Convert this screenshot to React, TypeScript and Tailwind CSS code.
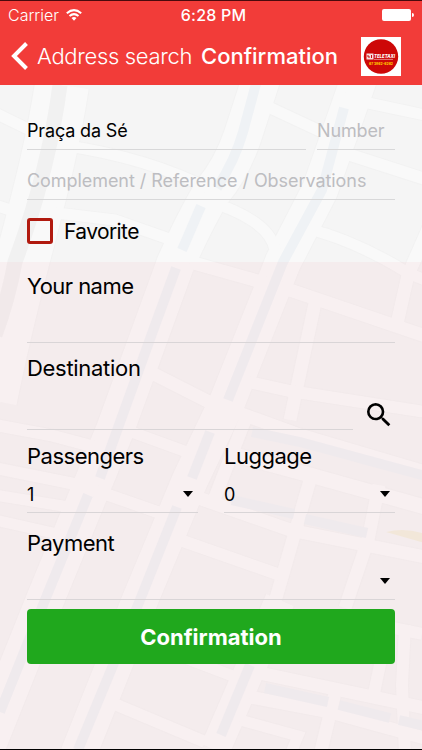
import { useState } from "react";
import { MdSearch } from "react-icons/md";

interface Road {
  d: string;
  w: number;
}

const roads: Road[] = [
  { d: "M62 85 C52 150 38 200 22 262 S0 350 -10 400", w: 54 },
  { d: "M264 70 L243 135 Q232 168 212 192 Q195 220 175 265 L115 430 L45 600 L-15 750", w: 38 },
  { d: "M362 70 L320 190 L283 262 L228 400 L190 480 L140 600 L78 755", w: 36 },
  { d: "M-5 113 L30 130", w: 11 },
  { d: "M62 145 Q150 158 211 190", w: 11 },
  { d: "M205 200 Q270 220 275 250", w: 11 },
  { d: "M-5 205 L28 216", w: 11 },
  { d: "M48 212 L115 220 L172 240", w: 11 },
  { d: "M262 104 L322 132", w: 11 },
  { d: "M340 97 L425 115", w: 11 },
  { d: "M335 150 L425 179", w: 12 },
  { d: "M305 228 Q355 240 408 273 L425 280", w: 11 },
  { d: "M430 225 L408 275 L396 328", w: 13 },
  { d: "M190 262 L290 290 L340 307 L425 336", w: 13 },
  { d: "M315 303 L290 420", w: 13 },
  { d: "M240 380 L290 391 L425 412", w: 12 },
  { d: "M150 372 L211 403 L300 435 L425 472", w: 13 },
  { d: "M245 420 L212 505", w: 13 },
  { d: "M235 455 L310 475 L425 507", w: 15 },
  { d: "M190 495 L290 530 L425 557", w: 13 },
  { d: "M310 480 L274 605", w: 13 },
  { d: "M379 485 L368 540 L345 608", w: 13 },
  { d: "M180 540 L280 575", w: 12 },
  { d: "M-5 425 L50 435 L95 447", w: 12 },
  { d: "M118 427 L195 455", w: 11 },
  { d: "M-5 468 L80 485 L160 513", w: 12 },
  { d: "M-5 495 L75 508", w: 11 },
  { d: "M-5 520 L62 535", w: 11 },
  { d: "M105 700 L205 742", w: 12 },
  { d: "M185 658 L238 678", w: 11 },
  { d: "M280 600 L215 750", w: 30 },
  { d: "M255 672 L425 708", w: 13 },
  { d: "M250 697 L330 712 L425 738", w: 13 },
  { d: "M337 685 L320 755", w: 13 },
  { d: "M240 720 L298 736 L290 755", w: 11 },
  { d: "M382 655 L373 698", w: 12 },
  { d: "M345 618 L422 634", w: 12 },
  { d: "M405 625 L402 685 L405 755", w: 12 },
];

const canals = [
  "M257 80 L243 132 Q235 160 217 188",
  "M201 206 L182 250",
  "M176 268 L154 328 L119 425 L100 478",
  "M88 495 L45 600 L0 712",
  "M344 108 L322 190 L283 262 L228 400",
  "M210 432 L192 478",
  "M177 507 L140 600 L78 750",
];

const waterBlocks = [
  "M252 432 L300 442 L425 476",
  "M232 500 L294 514",
  "M305 519 L367 533",
  "M265 688 L328 702",
  "M339 705 L390 718",
  "M399 720 L425 726",
  "M250 665 L221 735",
];

function MapBackground() {
  return (
    <svg className="absolute inset-0 h-[750px] w-[422px]" viewBox="0 0 422 750" fill="none">
      <rect width="422" height="750" fill="#f5f5f5" />
      <g stroke="#f2f2f2">
        {roads.map((road) => (
          <path key={road.d} d={road.d} strokeWidth={road.w + 2} />
        ))}
      </g>
      <g stroke="#f9f9f9">
        {roads.map((road) => (
          <path key={road.d} d={road.d} strokeWidth={road.w} />
        ))}
      </g>
      <path d="M60 85 C52 145 38 200 15 262 Q8 300 -5 335" stroke="#f1f1f1" strokeWidth="15" />
      <g stroke="#eff2f5" strokeWidth="10">
        {canals.map((d) => (
          <path key={d} d={d} />
        ))}
        {waterBlocks.map((d) => (
          <path key={d} d={d} />
        ))}
      </g>
      <path d="M386 532 Q405 527 425 534 L425 543 Z" fill="#f2efdf" />
      {/* tint over the passenger part of the form */}
      <rect y="262" width="422" height="488" fill="#f28994" fillOpacity="0.08" />
    </svg>
  );
}

function StatusBar() {
  return (
    <div className="flex h-[29px] items-center justify-between border-t border-[#4a0a0c] pl-[8px] pr-2 text-white">
      <div className="flex w-[125px] items-center gap-[7px]">
        <span className="text-[16px] font-light">Carrier</span>
        <svg className="h-3 w-4" viewBox="0 0 16 12" fill="none" stroke="#fff" strokeWidth="2">
          <path d="M0.8 4.3 Q8 -2 15.2 4.3" />
          <path d="M3.5 7.1 Q8 3.2 12.5 7.1" />
          <path d="M8 11.8 L5.5 9 Q8 7 10.5 9 Z" fill="#fff" stroke="none" />
        </svg>
      </div>
      <span className="text-[16px] font-medium tracking-[0.2px]">6:28 PM</span>
      <div className="flex w-[120px] items-center justify-end gap-px">
        <div className="h-3 w-[29px] rounded-[2px] bg-white" />
        <div className="h-1 w-0.5 rounded-r-full bg-white" />
      </div>
    </div>
  );
}

function Logo() {
  return (
    <svg className="h-[39px] w-[40px] shrink-0 overflow-visible" viewBox="0 0 40 39">
      <rect width="40" height="39" fill="#fff" />
      <circle cx="20" cy="19.5" r="17.2" fill="#cd0808" />
      <rect x="5.5" y="16.5" width="7" height="6" fill="#f7dcdc" />
      <path d="M7 18 V20 H9 M10.5 18 V21" stroke="#cd0808" fill="none" />
      <text x="13" y="20.8" fontSize="5.4" fontWeight="800" fontStyle="italic" fill="#fff" textLength="21" lengthAdjust="spacingAndGlyphs">
        TELETAXI
      </text>
      <path d="M13 22.4 H32" stroke="#eb9c9c" strokeWidth="0.8" />
      <text x="8" y="28" fontSize="3.8" fontWeight="800" fill="#ffc400" textLength="24" lengthAdjust="spacingAndGlyphs">
        67 3862-6262
      </text>
    </svg>
  );
}

function NavBar() {
  return (
    <div className="flex h-14 items-center pb-[2px] pl-[11px] pr-[21px] text-white">
      <svg className="h-7 w-[17px]" viewBox="0 0 17 28" fill="none" stroke="#fff" strokeWidth="4">
        <path d="M15.5 1.5 L3 14 L15.5 26.5" />
      </svg>
      <span className="ml-[9px] w-[164px] whitespace-nowrap pt-px text-[22px] font-light tracking-[-0.32px]">
        Address search
      </span>
      <span className="flex-1 whitespace-nowrap pt-px text-[22px] font-medium">Confirmation</span>
      <Logo />
    </div>
  );
}

function Caret() {
  return <span className="mr-[5px] h-0 w-0 border-x-[5px] border-t-[6px] border-x-transparent border-t-black" />;
}

interface SelectProps {
  label: string;
  value: string;
}

function Select({ label, value }: SelectProps) {
  return (
    <div className="flex-1">
      <div className="h-[45px] pt-[10px] text-[22px] leading-8 tracking-[-0.5px]">{label}</div>
      <div className="flex h-[38px] items-center justify-between border-b border-[#d9d5d7] pt-px text-[18px]">
        <span>{value}</span>
        <Caret />
      </div>
    </div>
  );
}

export default function App() {
  const [favorite, setFavorite] = useState(false);
  const [name, setName] = useState("");
  const [destination, setDestination] = useState("");

  return (
    <div className="relative h-[750px] w-[422px] overflow-hidden border-b border-black font-['Inter',sans-serif] text-black">
      <MapBackground />
      <div className="relative">
        <header className="bg-[#f23c39]">
          <StatusBar />
          <NavBar />
        </header>

        <main className="pl-[27px] pr-[27px]">
          <div className="flex gap-[11px] pt-[27px] text-[18px] tracking-[-0.15px]">
            <div className="flex h-[38px] w-[279px] items-center border-b border-[#d8d8d9]">Praça da Sé</div>
            <div className="flex h-[38px] flex-1 items-center border-b border-[#d8d8d9] text-[#bdbdc1]">Number</div>
          </div>
          <div className="flex h-[50px] items-center whitespace-nowrap border-b border-[#d8d8d9] pt-3 text-[18px] tracking-[-0.06px] text-[#bdbdc1]">
            Complement / Reference / Observations
          </div>

          <div className="flex h-[62px] items-center gap-[11px]">
            <button
              className="h-[26px] w-[26px] rounded-[3px] border-[3px] border-[#b11a0f]"
              onClick={() => setFavorite(!favorite)}
            >
              {favorite && <span className="block h-full bg-[#b11a0f]" />}
            </button>
            <span className="pt-px text-[21px] tracking-[-0.6px]">Favorite</span>
          </div>

          <div className="h-[44px] pt-[8px] text-[22px] leading-8 tracking-[-0.55px]">Your name</div>
          <input
            className="block h-[37px] w-full border-b border-[#d9d5d7] bg-transparent outline-none"
            value={name}
            onChange={(e) => setName(e.target.value)}
          />

          <div className="h-[43px] pt-[9px] text-[22px] leading-8 tracking-[-0.3px]">Destination</div>
          <div className="flex h-[44px]">
            <input
              className="h-[44px] w-[326px] border-b border-[#d9d5d7] bg-transparent outline-none"
              value={destination}
              onChange={(e) => setDestination(e.target.value)}
            />
            <MdSearch className="ml-[10px] mt-[13px] h-[32px] w-[32px] shrink-0" />
          </div>

          <div className="flex gap-[26px]">
            <Select label="Passengers" value="1" />
            <Select label="Luggage" value="0" />
          </div>
          <div className="flex pt-[4px]">
            <Select label="Payment" value="" />
          </div>

          <button className="mt-[9px] block h-[55px] w-full rounded-[4px] bg-[#20a81d] pt-px text-[22px] font-bold text-white">
            Confirmation
          </button>
        </main>
      </div>
    </div>
  );
}
